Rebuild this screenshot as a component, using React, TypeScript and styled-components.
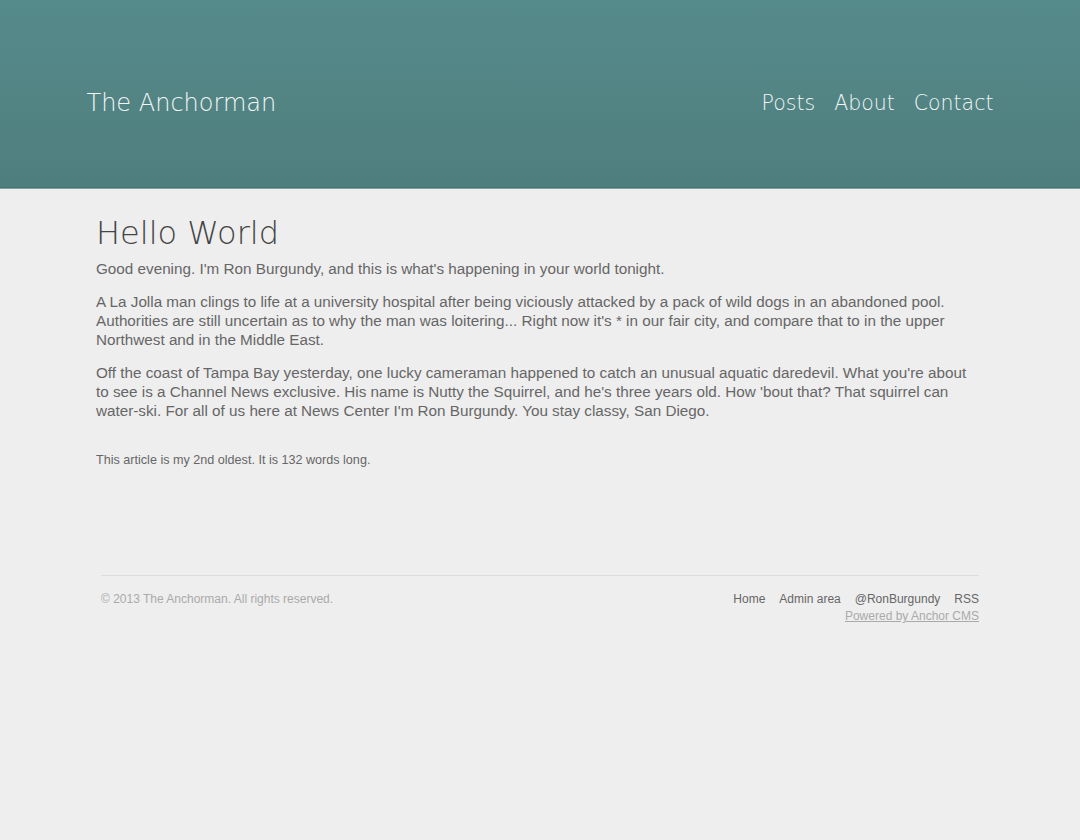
import React from "react";
import styled, { createGlobalStyle } from "styled-components";

const Global = createGlobalStyle`
  html, body { margin: 0; padding: 0; background: #eeeeee; }
  body { font-family: "Liberation Sans", Arial, sans-serif; color: #666; }
`;

const Header = styled.header`
  height: 187px;
  background: linear-gradient(to bottom, #568b8b 0%, #4f7e7e 100%);
  border-bottom: 1px solid #4a7474;
  box-shadow: 0 1px 0 #7fa3a3;
  display: flex;
  align-items: center;
`;

const HeaderInner = styled.div`
  width: 907px;
  margin: 0 auto;
  display: flex;
  justify-content: space-between;
  align-items: center;
  padding-top: 18px;
`;

const SiteTitle = styled.a`
  font-family: "DejaVu Sans", sans-serif;
  font-weight: 200;
  font-size: 24px;
  color: #f2f6f6;
  text-decoration: none;
`;

const Nav = styled.nav`
  display: flex;
  gap: 19px;
`;

const NavLink = styled.a`
  font-family: "DejaVu Sans", sans-serif;
  font-weight: 200;
  font-size: 20.5px;
  color: #f2f6f6;
  text-decoration: none;
`;

const Main = styled.main`
  width: 884px;
  margin: 0 auto;
  padding-top: 24px;
  transform: translateX(-2px);
`;

const Title = styled.h1`
  font-family: "DejaVu Sans", sans-serif;
  font-weight: 200;
  font-size: 32px;
  color: #444;
  margin: 0 0 5px;
  line-height: 42px;
`;

const Para = styled.p`
  font-size: 15.25px;
  line-height: 19px;
  margin: 0 0 14px;
  color: #666;
`;

const Meta = styled.p`
  font-size: 12.6px;
  color: #666;
  margin: 33px 0 0;
`;

const Footer = styled.footer`
  width: 878px;
  margin: 108px auto 0;
  border-top: 1px solid #dcdcdc;
  padding-top: 16px;
  display: flex;
  justify-content: space-between;
`;

const Copy = styled.p`
  margin: 0;
  font-size: 12px;
  color: #aaa;
`;

const FooterRight = styled.div`
  display: flex;
  flex-direction: column;
  align-items: flex-end;
  gap: 3px;
`;

const FooterLinks = styled.div`
  display: flex;
  gap: 14px;
`;

const FootLink = styled.a<{ $muted?: boolean }>`
  font-size: 12px;
  color: ${(p) => (p.$muted ? "#aaa" : "#666")};
  text-decoration: ${(p) => (p.$muted ? "underline" : "none")};
`;

export default function App() {
  return (
    <>
      <Global />
      <Header>
        <HeaderInner>
          <SiteTitle>The Anchorman</SiteTitle>
          <Nav>
            <NavLink>Posts</NavLink>
            <NavLink>About</NavLink>
            <NavLink>Contact</NavLink>
          </Nav>
        </HeaderInner>
      </Header>
      <Main>
        <Title>Hello World</Title>
        <Para>Good evening. I'm Ron Burgundy, and this is what's happening in your world tonight.</Para>
        <Para>
          A La Jolla man clings to life at a university hospital after being viciously attacked by a pack of wild dogs in an abandoned pool. Authorities are still uncertain as to why the man was loitering... Right now it's * in our fair city, and compare that to in the upper Northwest and in the Middle East.
        </Para>
        <Para>
          Off the coast of Tampa Bay yesterday, one lucky cameraman happened to catch an unusual aquatic daredevil. What you're about to see is a Channel News exclusive. His name is Nutty the Squirrel, and he's three years old. How 'bout that? That squirrel can water-ski. For all of us here at News Center I'm Ron Burgundy. You stay classy, San Diego.
        </Para>
        <Meta>This article is my 2nd oldest. It is 132 words long.</Meta>
      </Main>
      <Footer>
        <Copy>© 2013 The Anchorman. All rights reserved.</Copy>
        <FooterRight>
          <FooterLinks>
            <FootLink>Home</FootLink>
            <FootLink>Admin area</FootLink>
            <FootLink>@RonBurgundy</FootLink>
            <FootLink>RSS</FootLink>
          </FooterLinks>
          <FootLink $muted>Powered by Anchor CMS</FootLink>
        </FooterRight>
      </Footer>
    </>
  );
}
